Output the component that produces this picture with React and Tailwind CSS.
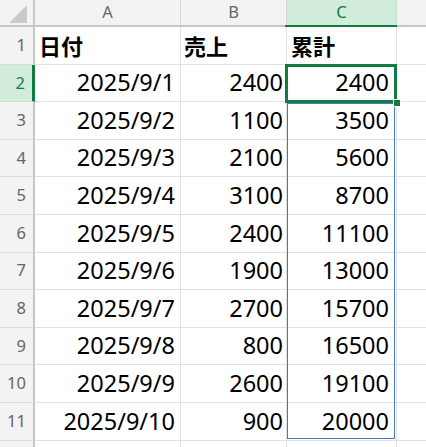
import React from "react";

const rows = [
  ["2025/9/1", "2400", "2400"],
  ["2025/9/2", "1100", "3500"],
  ["2025/9/3", "2100", "5600"],
  ["2025/9/4", "3100", "8700"],
  ["2025/9/5", "2400", "11100"],
  ["2025/9/6", "1900", "13000"],
  ["2025/9/7", "2700", "15700"],
  ["2025/9/8", "800", "16500"],
  ["2025/9/9", "2600", "19100"],
  ["2025/9/10", "900", "20000"],
];

const font = { fontFamily: '"Noto Sans", "Noto Sans CJK JP", sans-serif' };

function ColHead({ label, w, active }) {
  return (
    <div
      className={`${w} h-full flex items-center justify-center border-r shrink-0 ${
        active ? "bg-[#d2ecdc] text-[#107c41] border-r-[#c7ddd0]" : "bg-[#f3f3f3] text-[#666] border-r-[#d8d8d8]"
      }`}
    >
      <span className="text-[16.5px]">{label}</span>
    </div>
  );
}

function RowHead({ n, active }) {
  return (
    <div
      className={`w-[35px] shrink-0 h-full flex items-center justify-end pr-[7px] border-b ${
        active
          ? "bg-[#d2ecdc] text-[#107c41] border-r-[3px] border-r-[#107c41] border-b-[#d8d8d8]"
          : "bg-[#f3f3f3] text-[#666] border-r-2 border-r-[#c6c6c6] border-b-[#dadada]"
      }`}
    >
      <span className="text-[16.5px]">{n}</span>
    </div>
  );
}

export default function App() {
  return (
    <div className="relative w-[426px] h-[447px] overflow-hidden bg-white text-black" style={font}>
      {/* header row */}
      <div className="flex h-[27px] border-b-2 border-[#c6c6c6]">
        <div className="w-[35px] shrink-0 h-full bg-[#f3f3f3] border-r-2 border-r-[#c6c6c6] relative">
          <svg className="absolute left-[9px] top-[5px]" width="18" height="18" viewBox="0 0 18 18">
            <polygon points="18,0 18,18 0,18" fill="#c9c9c9" />
          </svg>
        </div>
        <ColHead label="A" w="w-[146px]" />
        <ColHead label="B" w="w-[106px]" />
        <ColHead label="C" w="w-[110px]" active />
        <div className="flex-1 h-full bg-[#f3f3f3]" />
      </div>

      {/* row 1 */}
      <div className="flex h-[37.6px]">
        <RowHead n={1} />
        <div className="w-[146px] shrink-0 h-full border-r border-b border-[#e1e1e1] flex items-center pl-[4px]">
          <span className="text-[22px] font-bold" style={{ fontFamily: '"Noto Sans CJK JP", sans-serif' }}>日付</span>
        </div>
        <div className="w-[106px] shrink-0 h-full border-r border-b border-[#e1e1e1] flex items-center pl-[3px]">
          <span className="text-[22px] font-bold" style={{ fontFamily: '"Noto Sans CJK JP", sans-serif' }}>売上</span>
        </div>
        <div className="w-[110px] shrink-0 h-full border-r border-b border-[#e1e1e1] flex items-center pl-[4px]">
          <span className="text-[22px] font-bold" style={{ fontFamily: '"Noto Sans CJK JP", sans-serif' }}>累計</span>
        </div>
        <div className="flex-1 h-full border-b border-[#e1e1e1]" />
      </div>

      {rows.map((r, i) => (
        <div key={i} className="flex h-[37.6px]">
          <RowHead n={i + 2} active={i === 0} />
          <div className="w-[146px] shrink-0 h-full border-r border-b border-[#e1e1e1] flex items-center justify-end pr-[5px]">
            <span className="text-[23.5px]">{r[0]}</span>
          </div>
          <div className="w-[106px] shrink-0 h-full border-r border-b border-[#e1e1e1] flex items-center justify-end pr-[3px]">
            <span className="text-[23.5px]">{r[1]}</span>
          </div>
          <div className="w-[110px] shrink-0 h-full border-r border-b border-[#e1e1e1] flex items-center justify-end pr-[7px]">
            <span className="text-[23.5px]">{r[2]}</span>
          </div>
          <div className="flex-1 h-full border-b border-[#e1e1e1]" />
        </div>
      ))}

      {/* row 12 partial */}
      <div className="flex h-[20px]">
        <div className="w-[35px] shrink-0 h-full bg-[#f3f3f3] border-r-2 border-r-[#c6c6c6]" />
        <div className="w-[146px] shrink-0 h-full border-r border-[#e1e1e1]" />
        <div className="w-[106px] shrink-0 h-full border-r border-[#e1e1e1]" />
        <div className="w-[110px] shrink-0 h-full border-r border-[#e1e1e1]" />
      </div>

      {/* column C header underline */}
      <div className="absolute left-[285px] top-[25px] w-[112px] h-[2px] bg-[#107c41]" />

      {/* blue range C3:C11 */}
      <div className="absolute left-[287px] top-[103px] w-[108px] h-[336px] border border-[#4a76c8]" />

      {/* selection C2 */}
      <div className="absolute left-[285px] top-[64px] w-[112px] h-[39px] border-[3px] border-[#107c41]" />
      {/* fill handle */}
      <div className="absolute left-[393px] top-[99px] w-[8px] h-[8px] bg-[#107c41] border border-white" />
    </div>
  );
}
